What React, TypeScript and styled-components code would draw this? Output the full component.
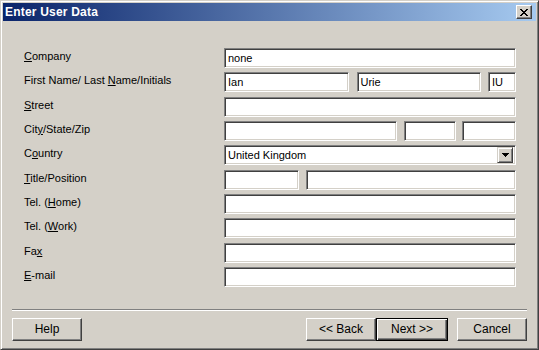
import React from 'react';
import styled, { createGlobalStyle } from 'styled-components';

const GlobalStyle = createGlobalStyle`
  html, body {
    margin: 0;
    padding: 0;
    background: #d4d0c8;
  }
  body {
    font-family: "Liberation Sans", Arial, sans-serif;
    font-size: 11px;
    color: #000;
  }
`;

const Window = styled.div`
  width: 539px;
  height: 350px;
  box-sizing: border-box;
  background: #d4d0c8;
  border: 1px solid;
  border-color: #d4d0c8 #404040 #404040 #d4d0c8;
  box-shadow: inset 1px 1px #ffffff, inset -1px -1px #808080;
  padding: 2px;
  display: flex;
  flex-direction: column;
`;

const TitleBar = styled.div`
  height: 18px;
  display: flex;
  align-items: center;
  justify-content: space-between;
  background: linear-gradient(to right, #0a246a, #a6caf0);
  padding-left: 2px;
`;

const Title = styled.span`
  color: #fff;
  font-weight: bold;
  font-size: 12px;
  letter-spacing: 0.2px;
`;

const CloseButton = styled.div`
  width: 16px;
  height: 14px;
  box-sizing: border-box;
  margin-right: 4px;
  background: #d4d0c8;
  border: 1px solid;
  border-color: #ffffff #404040 #404040 #ffffff;
  box-shadow: inset -1px -1px #808080;
  display: flex;
  align-items: center;
  justify-content: center;
`;

const Body = styled.div`
  flex: 1;
  display: flex;
  flex-direction: column;
  padding: 27px 0 0 0;
`;

const Form = styled.div`
  display: grid;
  grid-template-columns: 200px 292px;
  grid-auto-rows: 20px;
  row-gap: 4.33px;
  padding-left: 21px;
`;

const Label = styled.label`
  display: block;
  line-height: 17px;
  white-space: nowrap;
`;

const FieldGroup = styled.div`
  display: flex;
  justify-content: space-between;
`;

const Input = styled.div<{ $w?: number }>`
  width: ${(p) => (p.$w ? `${p.$w}px` : '100%')};
  height: 20px;
  box-sizing: border-box;
  background: #fff;
  border: 1px solid;
  border-color: #808080 #ffffff #ffffff #808080;
  box-shadow: inset 1px 1px #404040, inset -1px -1px #d4d0c8;
  padding: 0 2px 0 3px;
  display: flex;
  align-items: center;
  white-space: nowrap;
  overflow: hidden;
`;

const Select = styled(Input)`
  padding-right: 2px;
  justify-content: space-between;
`;

const DropButton = styled.div`
  width: 16px;
  height: 16px;
  box-sizing: border-box;
  background: #d4d0c8;
  border: 1px solid;
  border-color: #d4d0c8 #404040 #404040 #d4d0c8;
  box-shadow: inset 1px 1px #ffffff, inset -1px -1px #808080;
  display: flex;
  align-items: center;
  justify-content: center;
`;

const Separator = styled.div`
  margin: 22px 9px 0 9px;
  height: 0;
  border-top: 1px solid #808080;
  border-bottom: 1px solid #ffffff;
`;

const ButtonRow = styled.div`
  display: flex;
  justify-content: space-between;
  padding: 7px 9px 0 9px;
`;

const ButtonGroup = styled.div`
  display: flex;
  gap: 9px;
`;

const Pair = styled.div`
  display: flex;
`;

const Button = styled.div<{ $default?: boolean }>`
  width: ${(p) => (p.$default ? '72px' : '70px')};
  height: 23px;
  box-sizing: border-box;
  background: #d4d0c8;
  display: flex;
  align-items: center;
  justify-content: center;
  font-size: 12px;
  border: 1px solid;
  border-color: ${(p) =>
    p.$default ? '#000' : '#ffffff #404040 #404040 #ffffff'};
  box-shadow: ${(p) =>
    p.$default
      ? 'inset 1px 1px #ffffff, inset -1px -1px #404040, inset -2px -2px #808080'
      : 'inset -1px -1px #808080'};
`;

const rows: { label: React.ReactNode; field: React.ReactNode }[] = [
  {
    label: (
      <>
        <u>C</u>ompany
      </>
    ),
    field: <Input>none</Input>,
  },
  {
    label: (
      <>
        First Name/ Last <u>N</u>ame/Initials
      </>
    ),
    field: (
      <FieldGroup>
        <Input $w={125}>Ian</Input>
        <Input $w={124}>Urie</Input>
        <Input $w={28}>IU</Input>
      </FieldGroup>
    ),
  },
  {
    label: (
      <>
        <u>S</u>treet
      </>
    ),
    field: <Input />,
  },
  {
    label: (
      <>
        Cit<u>y</u>/State/Zip
      </>
    ),
    field: (
      <FieldGroup>
        <Input $w={173} />
        <Input $w={52} />
        <Input $w={54} />
      </FieldGroup>
    ),
  },
  {
    label: (
      <>
        C<u>o</u>untry
      </>
    ),
    field: (
      <Select>
        United Kingdom
        <DropButton>
          <svg width="7" height="4" viewBox="0 0 7 4" shapeRendering="crispEdges">
            <path d="M0 0h7v1H0zM1 1h5v1H1zM2 2h3v1H2zM3 3h1v1H3z" fill="#000" />
          </svg>
        </DropButton>
      </Select>
    ),
  },
  {
    label: (
      <>
        <u>T</u>itle/Position
      </>
    ),
    field: (
      <FieldGroup>
        <Input $w={75} />
        <Input $w={210} />
      </FieldGroup>
    ),
  },
  {
    label: (
      <>
        Tel. (<u>H</u>ome)
      </>
    ),
    field: <Input />,
  },
  {
    label: (
      <>
        Tel. (<u>W</u>ork)
      </>
    ),
    field: <Input />,
  },
  {
    label: (
      <>
        Fa<u>x</u>
      </>
    ),
    field: <Input />,
  },
  {
    label: (
      <>
        <u>E</u>-mail
      </>
    ),
    field: <Input />,
  },
];

const App = () => {
  return (
    <>
      <GlobalStyle />
      <Window>
        <TitleBar>
          <Title>Enter User Data</Title>
          <CloseButton>
            <svg width="8" height="7" viewBox="0 0 8 7" shapeRendering="crispEdges">
              <path
                d="M0 0h2v1H0zM6 0h2v1H6zM1 1h2v1H1zM5 1h2v1H5zM2 2h4v1H2zM3 3h2v1H3zM2 4h4v1H2zM1 5h2v1H1zM5 5h2v1H5zM0 6h2v1H0zM6 6h2v1H6z"
                fill="#000"
              />
            </svg>
          </CloseButton>
        </TitleBar>
        <Body>
          <Form>
            {rows.map((r, i) => (
              <React.Fragment key={i}>
                <Label>{r.label}</Label>
                {r.field}
              </React.Fragment>
            ))}
          </Form>
          <Separator />
          <ButtonRow>
            <Button>Help</Button>
            <ButtonGroup>
              <Pair>
                <Button>&lt;&lt; Back</Button>
                <Button $default>Next &gt;&gt;</Button>
              </Pair>
              <Button>Cancel</Button>
            </ButtonGroup>
          </ButtonRow>
        </Body>
      </Window>
    </>
  );
};

export default App;
